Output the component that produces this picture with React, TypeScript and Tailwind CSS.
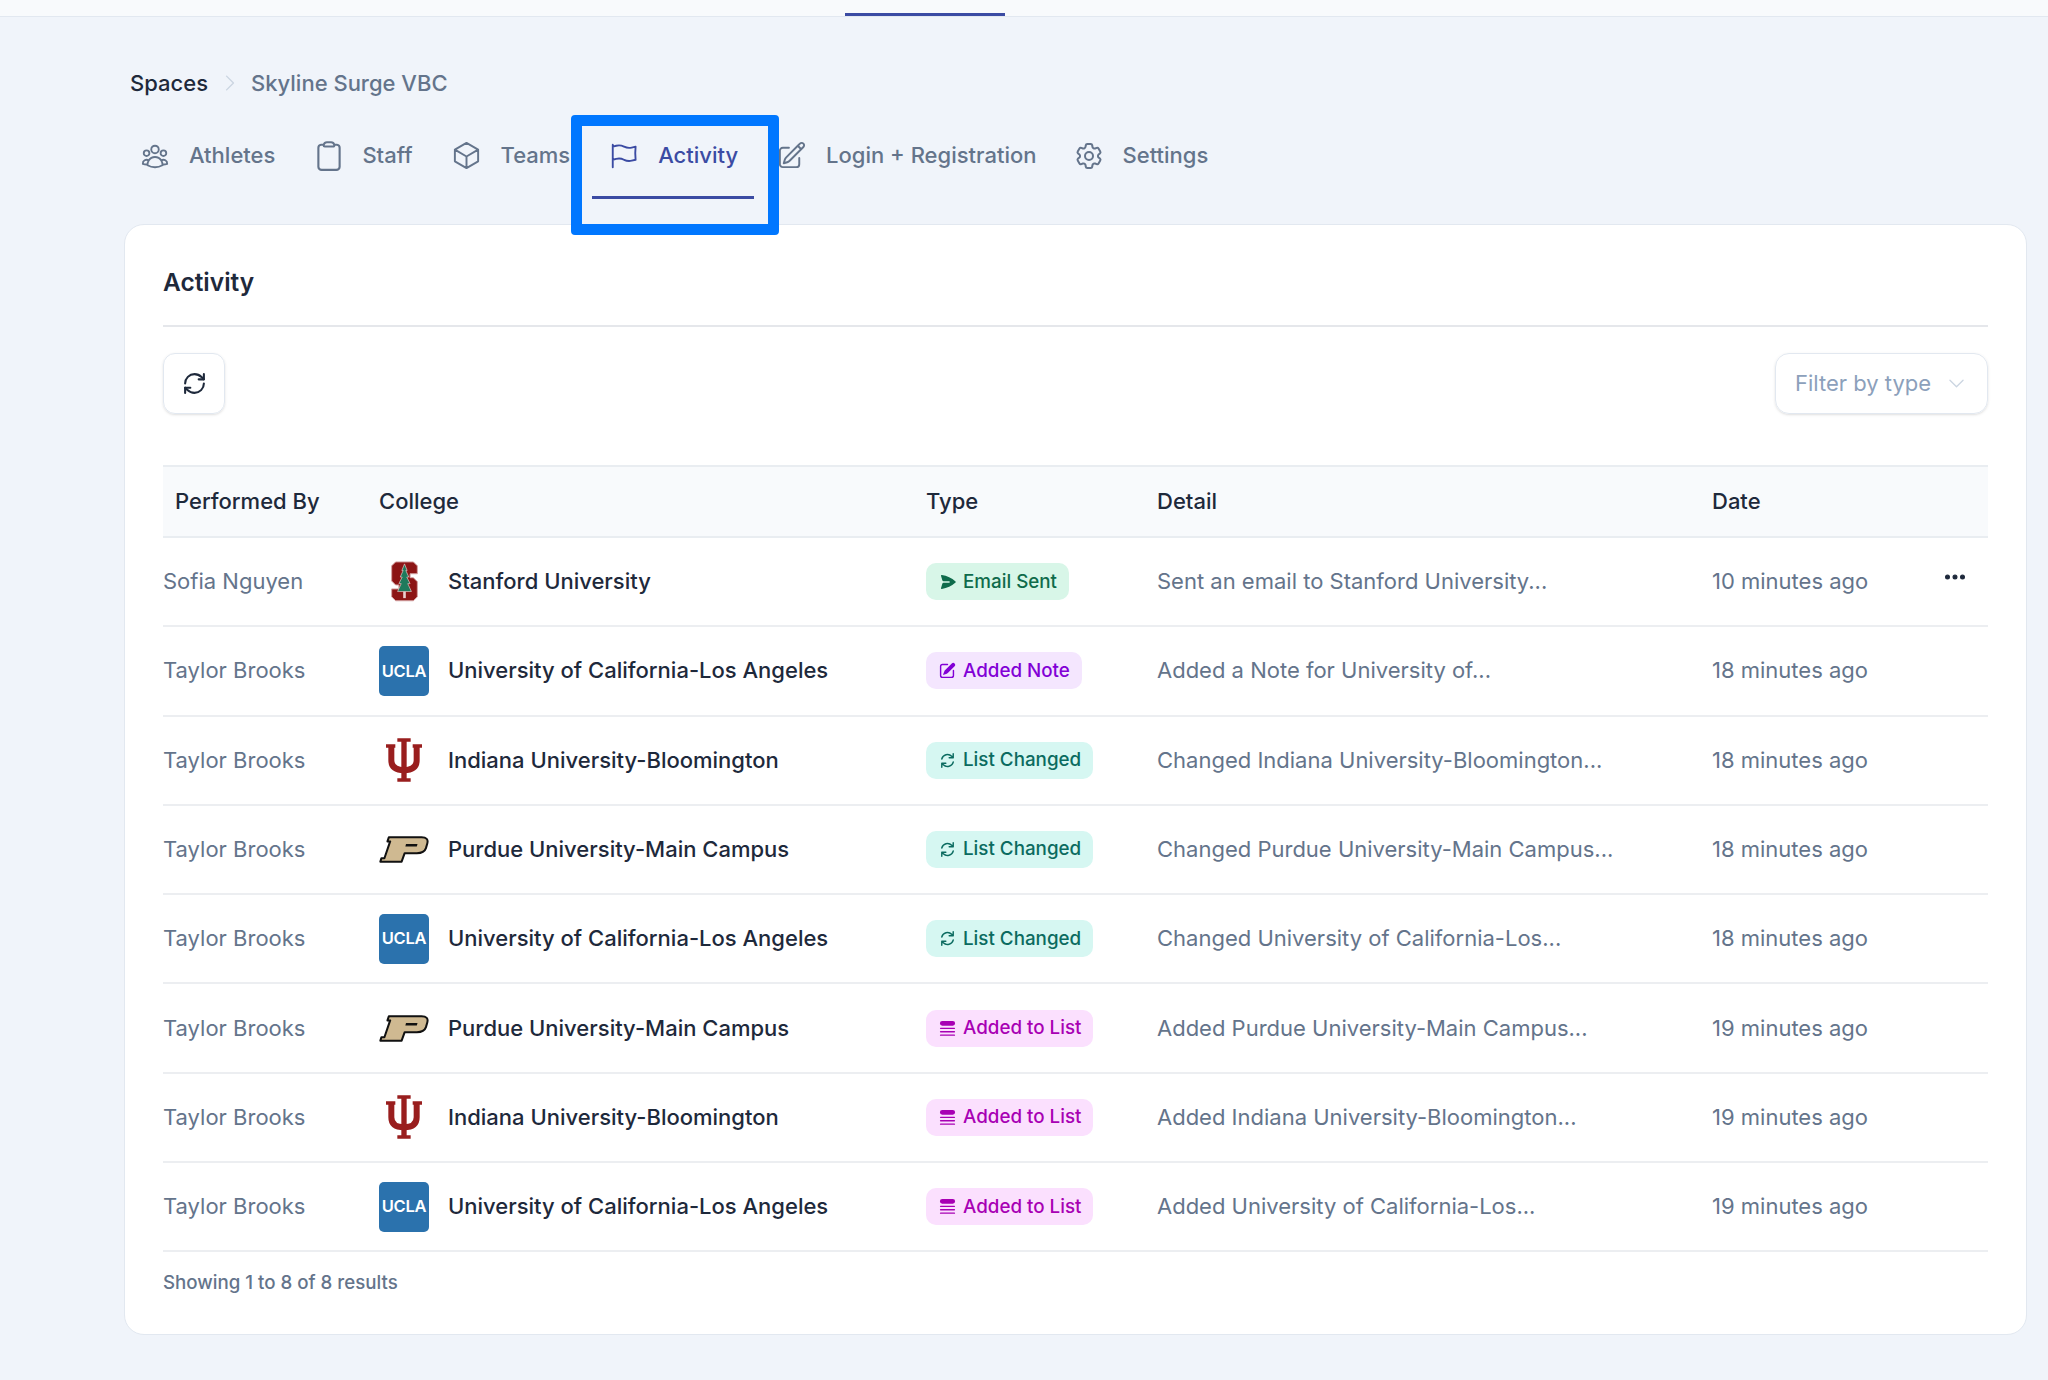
import type { ReactNode } from 'react';
import {
  HiOutlineUserGroup,
  HiOutlineClipboard,
  HiOutlineCube,
  HiOutlineFlag,
  HiOutlinePencilSquare,
  HiOutlineCog6Tooth,
  HiOutlineChevronRight,
  HiOutlineChevronDown,
  HiEllipsisHorizontal,
  HiMiniPaperAirplane,
  HiMiniPencilSquare,
  HiMiniArrowPath,
  HiMiniQueueList,
} from 'react-icons/hi2';
import { RefreshCw } from 'lucide-react';

type College = 'stanford' | 'ucla' | 'indiana' | 'purdue';
type ActivityType = 'email' | 'note' | 'list' | 'added';

interface Row {
  by: string;
  college: College;
  type: ActivityType;
  detail: string;
  date: string;
}

const collegeNames: Record<College, string> = {
  stanford: 'Stanford University',
  ucla: 'University of California-Los Angeles',
  indiana: 'Indiana University-Bloomington',
  purdue: 'Purdue University-Main Campus',
};

const rows: Row[] = [
  { by: 'Sofia Nguyen', college: 'stanford', type: 'email', detail: 'Sent an email to Stanford University...', date: '10 minutes ago' },
  { by: 'Taylor Brooks', college: 'ucla', type: 'note', detail: 'Added a Note for University of...', date: '18 minutes ago' },
  { by: 'Taylor Brooks', college: 'indiana', type: 'list', detail: 'Changed Indiana University-Bloomington...', date: '18 minutes ago' },
  { by: 'Taylor Brooks', college: 'purdue', type: 'list', detail: 'Changed Purdue University-Main Campus...', date: '18 minutes ago' },
  { by: 'Taylor Brooks', college: 'ucla', type: 'list', detail: 'Changed University of California-Los...', date: '18 minutes ago' },
  { by: 'Taylor Brooks', college: 'purdue', type: 'added', detail: 'Added Purdue University-Main Campus...', date: '19 minutes ago' },
  { by: 'Taylor Brooks', college: 'indiana', type: 'added', detail: 'Added Indiana University-Bloomington...', date: '19 minutes ago' },
  { by: 'Taylor Brooks', college: 'ucla', type: 'added', detail: 'Added University of California-Los...', date: '19 minutes ago' },
];

const StanfordLogo = () => (
  <svg viewBox="0 0 82 123" className="w-[27px] h-[41px]">
    <path
      d="M14 2H68L80 14V38H58V50H68L80 62V108L68 120H14L2 108V84H24V72H14L2 60V14Z"
      fill="#8c1515"
      stroke="#d3a3a3"
      strokeWidth="3"
    />
    <path
      d="M41 8L49 28H45L54 48H48L58 68H51L62 92H20L31 68H24L34 48H28L37 28H33Z"
      fill="#1f7a5c"
      stroke="#e9cfcf"
      strokeWidth="2"
    />
    <path d="M37 92H45V112H37Z" fill="#e9cfcf" />
  </svg>
);

const IndianaLogo = () => (
  <svg viewBox="0 0 108 131" className="w-[36px] h-[44px]">
    <g fill="#991e1e">
      <path d="M34 0H74V11H62V120H74V131H34V120H46V11H34Z" />
      <path d="M0 18H28V29H0ZM80 18H108V29H80Z" />
    </g>
    <path d="M16 24V66Q16 96 54 96Q92 96 92 66V24" fill="none" stroke="#991e1e" strokeWidth="18" />
  </svg>
);

const PurdueLogo = () => (
  <svg viewBox="0 0 148 80" className="w-[50px] h-[27px]">
    <path
      d="M29 4H126Q148 4 143 22L139 36Q134 51 112 51H76L67 76H4L7 66H16L33 16H25Z"
      fill="#cfb991"
      stroke="#111111"
      strokeWidth="6"
      strokeLinejoin="round"
    />
    <path d="M80 24H114L112 31H78Z" fill="#111111" />
  </svg>
);

const UclaLogo = () => (
  <div className="w-[50px] h-[50px] rounded-[5px] bg-[#2b72ad] flex items-center justify-center text-white text-[16.5px] font-semibold tracking-[-0.3px]">
    UCLA
  </div>
);

const logos: Record<College, ReactNode> = {
  stanford: <StanfordLogo />,
  ucla: <UclaLogo />,
  indiana: <IndianaLogo />,
  purdue: <PurdueLogo />,
};

const Badge = ({ type }: { type: ActivityType }) => {
  if (type === 'email') {
    return (
      <span className="inline-flex items-center h-[37px] pl-[13px] pr-[12px] gap-[6px] rounded-[10px] bg-[#d8f6e8] text-[#0f6b4b] text-[18.8px] font-medium">
        <HiMiniPaperAirplane className="w-[18px] h-[18px]" />
        Email Sent
      </span>
    );
  }
  if (type === 'note') {
    return (
      <span className="inline-flex items-center h-[37px] pl-[12px] pr-[12px] gap-[6px] rounded-[10px] bg-[#f4e6fe] text-[#8200d6] text-[18.8px] font-medium">
        <HiMiniPencilSquare className="w-[19px] h-[19px]" />
        Added Note
      </span>
    );
  }
  if (type === 'list') {
    return (
      <span className="inline-flex items-center h-[37px] pl-[12px] pr-[12px] gap-[6px] rounded-[10px] bg-[#d6f7f2] text-[#0b6b60] text-[18.8px] font-medium">
        <HiMiniArrowPath className="w-[19px] h-[19px]" />
        List Changed
      </span>
    );
  }
  return (
    <span className="inline-flex items-center h-[37px] pl-[12px] pr-[12px] gap-[6px] rounded-[10px] bg-[#fbe0fe] text-[#a800b4] text-[18.8px] font-medium">
      <HiMiniQueueList className="w-[19px] h-[19px]" />
      Added to List
    </span>
  );
};

const App = () => {
  return (
    <div className="min-h-screen bg-[#f0f4fa] font-[Inter,sans-serif] pb-[46px]">
      <div className="h-[17px] bg-[#f8fafc] border-b border-[#e2e8f0] flex items-end">
        <div className="ml-[845px] w-[160px] h-[3px] bg-[#3b4ba3]" />
      </div>

      <div className="mt-[52px] ml-[130px] flex items-center h-[28px] text-[22px] font-medium">
        <span className="text-[#1e293b]">Spaces</span>
        <HiOutlineChevronRight className="w-[22px] h-[22px] mx-[10.5px] text-[#cbd5e1]" />
        <span className="text-[#64748b]">Skyline Surge VBC</span>
      </div>

      <div className="mt-[13px] ml-[123px] flex gap-[5px] text-[22px] font-medium text-[#64748b]">
        <div className="h-[89px] pt-[2px] px-[17px] flex items-center gap-[19px]">
          <HiOutlineUserGroup className="w-[30px] h-[30px]" />
          Athletes
        </div>
        <div className="h-[89px] pt-[2px] pl-[17px] pr-[16px] flex items-center gap-[19px]">
          <HiOutlineClipboard className="w-[34px] h-[34px] -mx-[2.5px]" />
          Staff
        </div>
        <div className="h-[89px] pt-[2px] px-[17px] flex items-center gap-[19px]">
          <HiOutlineCube className="w-[31px] h-[31px]" />
          Teams
        </div>
        <div className="relative h-[89px] pt-[5px] pl-[17px] pr-[16px] flex items-center gap-[19px] border-b-[3px] border-[#3b4ba3] text-[#3b4ba3]">
          <HiOutlineFlag className="w-[30px] h-[30px]" />
          Activity
          <div className="absolute z-10 pointer-events-none left-[-21px] right-[-25px] top-[5px] bottom-[-39px] border-[11px] border-[#0077ff] rounded-[4px]" />
        </div>
        <div className="h-[89px] pt-[2px] pl-[17px] pr-[15px] flex items-center gap-[19px]">
          <HiOutlinePencilSquare className="w-[31px] h-[31px]" />
          Login + Registration
        </div>
        <div className="h-[89px] pt-[2px] px-[17px] flex items-center gap-[19px]">
          <HiOutlineCog6Tooth className="w-[32px] h-[32px] -mx-[1px]" />
          Settings
        </div>
      </div>

      <div className="mt-[25px] ml-[124px] w-[1903px] bg-white border border-[#e2e8f0] rounded-[20px] px-[38px] pb-[39px]">
        <div className="pt-[39px] pb-[25px] border-b-2 border-[#e5e7eb]">
          <h1 className="text-[24.5px] leading-[36px] font-semibold text-[#1e293b]">Activity</h1>
        </div>

        <div className="mt-[26px] flex items-center justify-between">
          <button className="w-[62px] h-[61px] rounded-[12px] border border-[#e2e8f0] shadow-sm flex items-center justify-center text-[#1e293b]">
            <RefreshCw className="w-[25px] h-[25px]" />
          </button>
          <div className="w-[213px] h-[61px] rounded-[14px] border border-[#e2e8f0] shadow-sm flex items-center justify-between pl-[19px] pr-[20px] text-[22px] text-[#8ca0bb]">
            Filter by type
            <HiOutlineChevronDown className="w-[21px] h-[21px] text-[#cbd5e1]" />
          </div>
        </div>

        <div className="mt-[51px]">
          <div className="grid grid-cols-[216px_547px_231px_555px_1fr] items-center h-[73px] bg-[#f8fafc] border-y-2 border-[#e9edf1] text-[22px] font-medium text-[#1e293b]">
            <div className="pl-[12px]">Performed By</div>
            <div>College</div>
            <div>Type</div>
            <div>Detail</div>
            <div>Date</div>
          </div>

          {rows.map((row, index) => (
            <div
              key={index}
              className="grid grid-cols-[216px_547px_231px_555px_1fr] items-center h-[89.3px] border-b-2 border-[#eceef1] last:border-[#f1f5f9] text-[22px]"
            >
              <div className="text-[#64748b]">{row.by}</div>
              <div className="flex items-center">
                <div className="w-[50px] h-[50px] flex items-center justify-center shrink-0">{logos[row.college]}</div>
                <span className="ml-[19px] font-medium text-[#1e293b]">{collegeNames[row.college]}</span>
              </div>
              <div>
                <Badge type={row.type} />
              </div>
              <div className="text-[#64748b]">{row.detail}</div>
              <div className="relative text-[#64748b]">
                {row.date}
                {index === 0 && (
                  <HiEllipsisHorizontal className="absolute right-[18px] top-[-3px] w-[30px] h-[30px] text-[#1e293b] stroke-1" />
                )}
              </div>
            </div>
          ))}

          <div className="pt-[19px] text-[18.7px] leading-[24px] font-medium text-[#64748b]">
            Showing 1 to 8 of 8 results
          </div>
        </div>
      </div>
    </div>
  );
};

export default App;
